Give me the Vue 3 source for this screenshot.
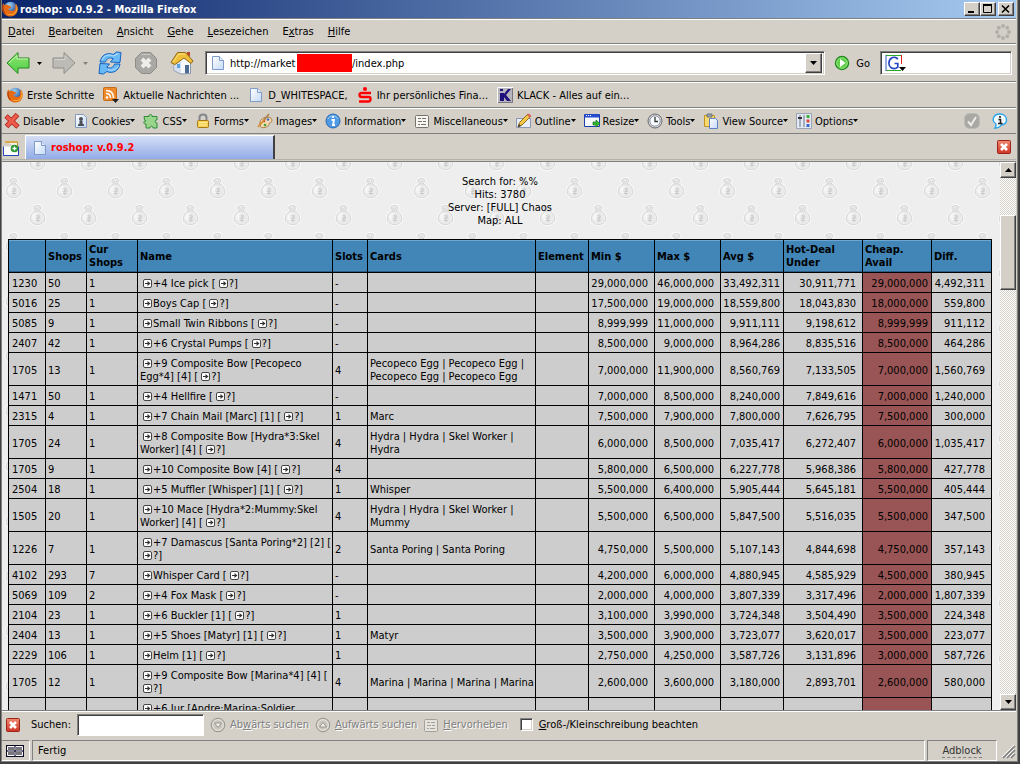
<script setup>
const menus = [['', 'D', 'atei'], ['', 'B', 'earbeiten'], ['', 'A', 'nsicht'], ['', 'G', 'ehe'], ['', 'L', 'esezeichen'], ['E', 'x', 'tras'], ['', 'H', 'ilfe']]
const tools = ['Disable', 'Cookies', 'CSS', 'Forms', 'Images', 'Information', 'Miscellaneous', 'Outline', 'Resize', 'Tools', 'View Source', 'Options']
const heads = [[''], ['Shops'], ['Cur', 'Shops'], ['Name'], ['Slots'], ['Cards'], ['Element'], ['Min $'], ['Max $'], ['Avg $'], ['Hot-Deal', 'Under'], ['Cheap.', 'Avail'], ['Diff.']]
// "@" marks the small arrow button, "/" a line break
const rows = [
  ['1230', '50', '1', '@+4 Ice pick [ @?]', '-', '', '29,000,000', '46,000,000', '33,492,311', '30,911,771', '29,000,000', '4,492,311'],
  ['5016', '25', '1', '@Boys Cap [ @?]', '-', '', '17,500,000', '19,000,000', '18,559,800', '18,043,830', '18,000,000', '559,800'],
  ['5085', '9', '1', '@Small Twin Ribbons [ @?]', '-', '', '8,999,999', '11,000,000', '9,911,111', '9,198,612', '8,999,999', '911,112'],
  ['2407', '42', '1', '@+6 Crystal Pumps [ @?]', '-', '', '8,500,000', '9,000,000', '8,964,286', '8,835,516', '8,500,000', '464,286'],
  ['1705', '13', '1', '@+9 Composite Bow [Pecopeco/Egg*4] [4] [ @?]', '4', 'Pecopeco Egg | Pecopeco Egg |/Pecopeco Egg | Pecopeco Egg', '7,000,000', '11,900,000', '8,560,769', '7,133,505', '7,000,000', '1,560,769'],
  ['1471', '50', '1', '@+4 Hellfire [ @?]', '-', '', '7,000,000', '8,500,000', '8,240,000', '7,849,616', '7,000,000', '1,240,000'],
  ['2315', '4', '1', '@+7 Chain Mail [Marc] [1] [ @?]', '1', 'Marc', '7,500,000', '7,900,000', '7,800,000', '7,626,795', '7,500,000', '300,000'],
  ['1705', '24', '1', '@+8 Composite Bow [Hydra*3:Skel/Worker] [4] [ @?]', '4', 'Hydra | Hydra | Skel Worker |/Hydra', '6,000,000', '8,500,000', '7,035,417', '6,272,407', '6,000,000', '1,035,417'],
  ['1705', '9', '1', '@+10 Composite Bow [4] [ @?]', '4', '', '5,800,000', '6,500,000', '6,227,778', '5,968,386', '5,800,000', '427,778'],
  ['2504', '18', '1', '@+5 Muffler [Whisper] [1] [ @?]', '1', 'Whisper', '5,500,000', '6,400,000', '5,905,444', '5,645,181', '5,500,000', '405,444'],
  ['1505', '20', '1', '@+10 Mace [Hydra*2:Mummy:Skel/Worker] [4] [ @?]', '4', 'Hydra | Hydra | Skel Worker |/Mummy', '5,500,000', '6,500,000', '5,847,500', '5,516,035', '5,500,000', '347,500'],
  ['1226', '7', '1', '@+7 Damascus [Santa Poring*2] [2] [/@?]', '2', 'Santa Poring | Santa Poring', '4,750,000', '5,500,000', '5,107,143', '4,844,698', '4,750,000', '357,143'],
  ['4102', '293', '7', '@Whisper Card [ @?]', '-', '', '4,200,000', '6,000,000', '4,880,945', '4,585,929', '4,500,000', '380,945'],
  ['5069', '109', '2', '@+4 Fox Mask [ @?]', '-', '', '2,000,000', '4,000,000', '3,807,339', '3,317,496', '2,000,000', '1,807,339'],
  ['2104', '23', '1', '@+6 Buckler [1] [ @?]', '1', '', '3,100,000', '3,990,000', '3,724,348', '3,504,490', '3,500,000', '224,348'],
  ['2404', '13', '1', '@+5 Shoes [Matyr] [1] [ @?]', '1', 'Matyr', '3,500,000', '3,900,000', '3,723,077', '3,620,017', '3,500,000', '223,077'],
  ['2229', '106', '1', '@Helm [1] [ @?]', '1', '', '2,750,000', '4,250,000', '3,587,726', '3,131,896', '3,000,000', '587,726'],
  ['1705', '12', '1', '@+9 Composite Bow [Marina*4] [4] [/@?]', '4', 'Marina | Marina | Marina | Marina', '2,600,000', '3,600,000', '3,180,000', '2,893,701', '2,600,000', '580,000'],
  ['', '', '', '@+6 Jur [Andre:Marina:Soldier/\u00a0/\u00a0', '', 'Andre | Marina | Soldier |/\u00a0', '', '', '', '', '', ''],
]
const lines = (text) => text.split('/').map((l) => l.split(/(@)/).filter((p) => p !== ''))
const wheel = Array.from({ length: 8 }, (_, i) => ({ x: 8 + 6 * Math.cos(i * Math.PI / 4), y: 8 + 6 * Math.sin(i * Math.PI / 4) }))
</script>

<template>
  <div class="window">
    <svg class="defs" width="0" height="0" aria-hidden="true">
      <defs>
        <linearGradient id="gGreen" x1="0" y1="0" x2="0" y2="1"><stop offset="0" stop-color="#8fe36f" /><stop offset="1" stop-color="#4fd04a" /></linearGradient>
        <linearGradient id="gRed" x1="0" y1="0" x2="0" y2="1"><stop offset="0" stop-color="#f08a70" /><stop offset="1" stop-color="#cf3424" /></linearGradient>
        <linearGradient id="gPage" x1="0" y1="0" x2="1" y2="1"><stop offset="0" stop-color="#fff" /><stop offset="1" stop-color="#c4daf8" /></linearGradient>
        <radialGradient id="gGlobe" cx=".4" cy=".25" r=".7"><stop offset="0" stop-color="#9fd8f5" /><stop offset="1" stop-color="#1a3f93" /></radialGradient>
        <symbol id="fox" viewBox="0 0 16 16">
          <circle cx="8.5" cy="7.5" r="6.8" fill="url(#gGlobe)" />
          <path d="M1.2 2.2 2.6 4.3C4 3.2 6 3.6 7.2 4.8L9.4 5.7 8.2 7.2 6.4 7.6C6.6 9.8 10 10.6 12.3 9.2 13.6 8 13.6 5.5 12.6 3.2L14 4.2 13.9 2.4C17.2 7 15.8 12.2 12.4 14.4 8.4 16.8 2.5 15.3.8 10.5-.1 7.6.2 4.6 1.2 2.2Z" fill="#e66a12" />
          <path d="M14 3.5c1.5 4 .2 8-3.2 9.4-3.4 1.1-6.6-.3-7.6-3 1.6 5.2 9.8 6.2 12-.8.6-2-.1-4-1.2-5.6Z" fill="#ffc132" />
          <path d="M1.1 4.5c-.5 3.3.2 6.4 2.3 8.3" fill="none" stroke="#a53106" />
        </symbol>
        <symbol id="page" viewBox="0 0 16 16">
          <path d="M2.500 1.500h7l4 4v9h-11Z" fill="url(#gPage)" stroke="#7d9ac8" /><path d="M9.500 1.500v4h4" fill="#e8f1ff" stroke="#7d9ac8" />
        </symbol>
        <symbol id="closeBox" viewBox="0 0 14 14">
          <rect x=".5" y=".5" width="13" height="13" rx="1" fill="url(#gRed)" stroke="#9d2418" /><path d="m4 4 6 6M10 4l-6 6" stroke="#fff" stroke-width="2.600" />
        </symbol>
        <symbol id="list" viewBox="0 0 16 16">
          <rect x="1.500" y="2.500" width="13" height="12" rx="1" fill="#f7f6f3" stroke="#77736b" /><path d="M4 5.500h3m1 0h4M4 8.500h4m1 0h3M4 11.500h2m1 0h5" stroke="#77736b" />
        </symbol>
      </defs>
    </svg>

    <header class="titlebar">
      <svg class="i16"><use href="#fox" /></svg>
      <h1>roshop: v.0.9.2 - Mozilla Firefox</h1>
      <div class="winbtns">
        <button aria-label="Minimieren"><svg viewBox="0 0 12 10"><path d="M2 8h6" stroke="#000" stroke-width="2" /></svg></button>
        <button aria-label="Maximieren"><svg viewBox="0 0 12 10"><path d="M1.500 1.500h8v7h-8Z" fill="none" stroke="#000" /><path d="M1 1h9" stroke="#000" stroke-width="2" /></svg></button>
        <button class="x" aria-label="Schließen"><svg viewBox="0 0 12 10"><path d="m2 1.500 7 7M9 1.500l-7 7" stroke="#000" stroke-width="1.600" /></svg></button>
      </div>
    </header>

    <nav class="bar menu">
      <button v-for="m in menus" :key="m[1]">{{ m[0] }}<u>{{ m[1] }}</u>{{ m[2] }}</button>
      <svg class="i16 end" viewBox="0 0 16 16"><circle v-for="(d, i) in wheel" :key="i" :cx="d.x" :cy="d.y" r="1.900" fill="#b1afaa" /></svg>
    </nav>

    <div class="bar navbar">
      <button class="arrowbtn" aria-label="Zurück">
        <svg class="i24" viewBox="0 0 24 24"><path d="M1 12 12 1.500v5.500h11v10H12v5.500Z" fill="url(#gGreen)" stroke="#238a1d" /><path d="M3 12l8-7.500v3.500h11" fill="none" stroke="#c9f5b5" /></svg>
        <svg class="drop" viewBox="0 0 5 3"><path d="M0 0h5L2.500 3Z" /></svg>
      </button>
      <button class="arrowbtn" aria-label="Vor" disabled>
        <svg class="i24" viewBox="0 0 24 24"><path d="M23 12 12 1.500v5.500H1v10h11v5.500Z" fill="#bdbbb6" stroke="#8f8d89" /><path d="M2 8.500h11v-4" fill="none" stroke="#d5d3ce" /></svg>
        <svg class="drop" viewBox="0 0 5 3"><path d="M0 0h5L2.500 3Z" fill="#85837f" /></svg>
      </button>
      <button class="big" aria-label="Neu laden">
        <svg class="i24" viewBox="0 0 24 24">
          <path d="M2 11C3 4.500 9 .8 15.200 3.500L18.500 1l4.500.500-1 10-9.500-.500 2.700-3.200C11.500 6 8.500 7.500 7.500 11Z" fill="#69b9f5" stroke="#1763c0" />
          <path d="M22 13c-1 6.500-7 10.200-13.200 7.500L5.500 23 1 22.500l1-10 9.500.5-2.700 3.200c3.700 1.800 6.700.3 7.700-3.200Z" fill="#69b9f5" stroke="#1763c0" />
          <path d="M4 9C6 4 11 3 15.500 5L20.500 2.500M10 18.500c4.500 2 9-.5 10.500-4" fill="none" stroke="#bde3ff" />
        </svg>
      </button>
      <button class="big" aria-label="Stopp" disabled>
        <svg class="i24" viewBox="0 0 24 24"><path d="M7.500 1.500h9l6 6v9l-6 6h-9l-6-6v-9Z" fill="#a9a8a5" stroke="#8d8b88" /><path d="M7.500 3.500h9" stroke="#c9c7c3" /><path d="m8 8 8 8M16 8l-8 8" stroke="#efede9" stroke-width="4" /></svg>
      </button>
      <button class="big" aria-label="Startseite">
        <svg class="i24" viewBox="0 0 24 24"><path d="m4 11 7-7 9.500 7v11.500l-9.500.5-7-3.500Z" fill="#f7f9fd" stroke="#8b98ad" /><path d="M4.500 12l6.500-6v16l-6.500-3Z" fill="#d4dfef" /><path d="M1 11.500 7.500 1.500h8l7.500 8.500-2 2.500-7-5.500-9 6.500Z" fill="#efbf38" stroke="#8c6715" /><path d="m3 11 6-8h6" fill="none" stroke="#fbe487" /><path d="M17 1h3v5l-3-3Z" fill="#b4482c" /><path d="M15 14h4v8l-4 .5Z" fill="#4d6a91" /><rect x="7" y="13" width="3" height="4" fill="#5aa2e0" /></svg>
      </button>
      <div class="field url">
        <svg class="i16"><use href="#page" /></svg>
        <input class="host" aria-label="Adresse" value="http://market"><span class="mask"></span><input class="path" aria-label="Pfad" value="/index.php">
        <button class="classic combo" aria-label="Adressliste"><svg viewBox="0 0 7 4"><path d="M0 0h7L3.500 4Z" /></svg></button>
      </div>
      <button class="go"><svg class="i16" viewBox="0 0 16 16"><circle cx="8" cy="8" r="6.500" fill="#62cf4c" stroke="#1f8a1c" stroke-width="1.400" /><circle cx="8" cy="8" r="5.300" fill="none" stroke="#a8ec90" stroke-width=".8" /><path d="m6 4 5.500 4L6 12Z" fill="#fff" /></svg>Go</button>
      <div class="field search">
        <svg class="google" viewBox="0 0 22 18"><path d="M1 17V1" stroke="#3557c8" /><path d="M1 1.500h15M1 16.500h15" stroke="#2da72d" /><path d="M16.500 1v9" stroke="#e32222" /><path d="M12.800 5.200C11.500 3 8.500 2.700 6.300 4.200 3 6.500 3.300 12 6.200 13.700c2.200 1.300 5 .8 6.600-.5V9.500H9.500" fill="none" stroke="#2547c5" stroke-width="1.700" /><path d="M14 13h7l-3.500 4Z" /></svg>
        <input aria-label="Google-Suche">
      </div>
    </div>

    <div class="bar bookmarks">
      <a href="#"><svg class="i16"><use href="#fox" /></svg>Erste Schritte</a>
      <a href="#"><svg class="i16" viewBox="0 0 16 16"><rect x=".5" y=".5" width="13" height="13" rx="1" fill="#ef8a2c" stroke="#c96a14" /><circle cx="4" cy="10.500" r="1.300" fill="#fff" /><path d="M3 6.500c3 0 4.500 1.500 4.500 4.500M3 3.500c5 0 7.500 2.500 7.500 7.500" fill="none" stroke="#fff" stroke-width="1.500" /><path d="M9 12h7l-3.500 4Z" fill="#222" /></svg>Aktuelle Nachrichten ...</a>
      <a href="#"><svg class="i16"><use href="#page" /></svg>D_WHITESPACE,</a>
      <a href="#"><svg class="i16" viewBox="0 0 16 16"><circle cx="8" cy="2" r="2" fill="#f00" /><path d="M14 6H5c-2 0-2.500.5-2.500 2s.5 2 2.500 2h7c1.200 0 1.500.3 1.500 2s-.5 2.500-2 2.500H2" fill="none" stroke="#f00" stroke-width="2.400" /></svg>Ihr persönliches Fina...</a>
      <a href="#"><svg class="i16" viewBox="0 0 16 16"><path d="M0 0h16v16H0Z" fill="#b5b5bb" /><path d="M.5 16V.5H16" fill="none" stroke="#fff" /><path d="M15.500 1v14.500H1" fill="none" stroke="#77777d" /><path d="M3 2h3v2H3ZM3 6h4v1l4-5h3L9 8l5 6h-4L7 10v4H3Z" fill="#20107e" /></svg>KLACK - Alles auf ein...</a>
    </div>

    <div class="bar devbar">
      <button v-for="(t, i) in tools" :key="t">
        <svg class="i16" viewBox="0 0 16 16">
          <g v-if="i === 0"><path d="m2 3 12 11M13.500 1.500l-11 12" stroke="#a92217" stroke-width="5" /><path d="m2.500 3.500 11 10M13 2l-10 11" stroke="#ee5b4c" stroke-width="3.400" /></g>
          <g v-else-if="i === 1"><path d="M2.500 1.500h8l3 3v10h-11Z" fill="url(#gPage)" stroke="#8298bd" /><circle cx="8" cy="6" r="2" fill="#4b5157" /><path d="M6.500 8h3v2.500l1.500 1V13H5v-1.500l1.500-1Z" fill="#4b5157" /></g>
          <path v-else-if="i === 2" d="M1 3.500h5c-1-2.500 4-2.500 3 0h5v3.500c-2.500-.5-2.500 3.500 0 3v5h-4c.5-2.500-3.500-2.500-3 0H3v-4c-3 .5-3-3.500 0-3L1.500 7Z" fill="#9ad58e" stroke="#2f8b35" />
          <g v-else-if="i === 3"><path d="M4.500 8V4.500c0-4 7-4 7 0V8" fill="none" stroke="#85868b" stroke-width="2" /><rect x="2.500" y="7.500" width="11" height="7" rx="1" fill="#f6d04f" stroke="#a47b18" /><path d="M4 9.500h8M4 12h8" stroke="#fff0a5" /></g>
          <g v-else-if="i === 4"><path d="M3 9c1-5 11-7 12-2 .5 3-3 2-3 4 .5 3-9 6-9 1Z" fill="#f3dab1" stroke="#a97d46" /><circle cx="11" cy="6.500" r="1.300" fill="#3a6fd0" /><circle cx="7" cy="8" r="1.300" fill="#d23a2f" /><circle cx="8" cy="12" r="1.300" fill="#3ba43b" /><path d="m1 14 7-8" stroke="#d28a2f" stroke-width="1.600" /><path d="m7 7 5-6" stroke="#b0804a" stroke-width="1.600" /></g>
          <g v-else-if="i === 5"><circle cx="8" cy="8" r="7" fill="#4f9ae6" stroke="#2e69ae" /><path d="M3 6c2-4 8-4 10 0" fill="none" stroke="#a7d0f9" /><path d="M8 3v2M6.500 7H9l-1 5h2" fill="none" stroke="#fff" stroke-width="1.800" /></g>
          <use v-else-if="i === 6" href="#list" />
          <g v-else-if="i === 7"><path d="M.5 5.500h14v9H.5Z" fill="#e8eef9" stroke="#8b97b5" /><path d="m2 14 1.500-4.500L12 1l2.500 2.500L6 12Z" fill="#f5c945" stroke="#8f6d1b" /><path d="M11 2l2.500 2.500L15.500 3 13 .5Z" fill="#dd6558" /><path d="m2 14 1-3 2 2Z" fill="#333" /></g>
          <g v-else-if="i === 8"><path d="M.5 1.500h15v12H.5Z" fill="#f7f9fd" stroke="#1b3db0" /><path d="M1 3h14" stroke="#274fd0" stroke-width="3" /><path d="M2 2.500h1m1 0h1m1 0h1" stroke="#fff" /><path d="M9 9h3V7l4 3.500L12 14v-2H9Z" fill="#35b42f" stroke="#16761a" stroke-width=".7" /></g>
          <g v-else-if="i === 9"><circle cx="8" cy="8" r="7" fill="#dcdde2" stroke="#66676d" /><circle cx="8" cy="8" r="5.200" fill="#f8fbff" stroke="#8c919d" /><path d="M8 4v4.500h3" fill="none" stroke="#333" stroke-width="1.300" /></g>
          <g v-else-if="i === 10"><path d="M1.500 2.500h10v11h-10Z" fill="#f7d96c" stroke="#c49524" /><path d="M4 1h5v3H4Z" fill="#98a3ae" stroke="#606b75" stroke-width=".8" /><path d="M6.500 5.500h6l2 2v8h-8Z" fill="url(#gPage)" stroke="#5c82c2" /></g>
          <g v-else><path d="M.5.5h15v15H.5Z" fill="#e2e9f4" stroke="#9aa4b5" /><path d="M4 2v12M8 2v12" stroke="#6d7785" /><path d="M2 5h4" stroke="#333" stroke-width="2" /><path d="M10.500 2h3v3h-3Z" fill="#3cae3c" /><path d="M10.500 6.500h3v3h-3Z" fill="#e04a3c" /><path d="M10.500 11h3v3h-3Z" fill="#3b6bd0" /></g>
        </svg><span>{{ t }}<svg class="drop" viewBox="0 0 5 3"><path d="M0 0h5L2.500 3Z" /></svg></span>
      </button>
      <svg class="i16 end" viewBox="0 0 16 16"><rect x=".5" y=".5" width="15" height="15" rx="5" fill="#a9a8a4" stroke="#bdbbb6" /><path d="m4 8.500 3 3.500 5-8" fill="none" stroke="#eeece8" stroke-width="2" /></svg>
      <svg class="i16 tip" viewBox="0 0 16 16"><path d="M8 1c8 0 9 11 1 11-1 2-4 3-6 3 1-1 1-2 1-4C-1 8 1 1 8 1Z" fill="#f3faff" stroke="#27a4ea" stroke-width="1.400" /><path d="M8 3v2M6.500 6.500h2V10M6 10.500h4.500" fill="none" stroke="#222" stroke-width="1.600" /></svg>
    </div>

    <div class="tabs">
      <button class="newtab" aria-label="Neuer Tab"><svg class="i16" viewBox="0 0 16 16"><path d="M2.500 1.500h12v6" fill="#f5f2e8" stroke="#b98a2b" /><path d="M2 2h13" stroke="#dba94a" stroke-width="2" /><path d="M.5 6.500v9h15v-9" fill="#fff" stroke="#2445b5" /><circle cx="11.500" cy="8.500" r="3.800" fill="#2d9631" /><path d="M9.500 8.500h4M11.500 6.500v4" stroke="#fff" stroke-width="1.300" /></svg></button>
      <button class="tab"><svg class="i16"><use href="#page" /></svg>roshop: v.0.9.2</button>
      <button class="closetab" aria-label="Tab schließen"><svg class="i14"><use href="#closeBox" /></svg></button>
    </div>

    <div class="view">
      <main class="page">
        <svg class="wallpaper" aria-hidden="true">
          <defs>
            <symbol id="bag" viewBox="0 0 18 22" overflow="visible">
              <path d="M7 6.500 5 4V2l3-1.500h3L13 2.500 11 6.500c4 1.500 6 5 6 8.500 0 4-3.500 6.500-8 6.500S1 19 1 15C1 11.500 3 8 7 6.500Z" fill="#ededed" stroke="#fafafa" stroke-width="3" />
              <path d="M7 6.500 5 4V2l3-1.500h3L13 2.500 11 6.500c4 1.500 6 5 6 8.500 0 4-3.500 6.500-8 6.500S1 19 1 15C1 11.500 3 8 7 6.500Z" fill="#ebebeb" stroke="#d2d2d2" />
              <path d="M6 3l3 2 2-3M6.500 6.500h5" fill="none" stroke="#cfcfcf" stroke-width=".8" /><circle cx="7" cy="13" r="4" fill="#f6f6f6" />
              <path d="M7 12h4.500l-4 5H12M6.500 14.500h5.500M9.500 10v9" fill="none" stroke="#c2c2c2" stroke-width=".8" />
            </symbol>
            <pattern id="bags" width="51" height="55" patternUnits="userSpaceOnUse">
              <rect width="51" height="55" fill="#eee" />
              <use href="#bag" x="3" y="16" width="17" height="20" /><use href="#bag" x="27" y="43" width="17" height="20" /><use href="#bag" x="27" y="-12" width="17" height="20" />
            </pattern>
          </defs>
          <rect width="100%" height="100%" fill="url(#bags)" />
        </svg>
        <p class="info">Search for: %%<br>Hits: 3780<br>Server: [FULL] Chaos<br>Map: ALL</p>
        <table>
          <colgroup><col v-for="(h, i) in heads" :key="i" :class="'c' + i"></colgroup>
          <thead>
            <tr><th v-for="(h, i) in heads" :key="i" scope="col"><template v-for="(l, k) in h" :key="k"><br v-if="k">{{ l }}</template></th></tr>
          </thead>
          <tbody>
            <tr v-for="(r, ri) in rows" :key="ri">
              <td>{{ r[0] }}</td><td>{{ r[1] }}</td><td>{{ r[2] }}</td>
              <td><template v-for="(l, k) in lines(r[3])" :key="k"><br v-if="k"><template v-for="(p, j) in l" :key="j"><svg v-if="p === '@'" class="mark" :class="{ lead: j === 0 }" viewBox="0 0 9 9"><rect x=".5" y=".5" width="8" height="8" rx="1.500" fill="#fff" stroke="#444" /><path d="M2 4.500h3" stroke="#333" /><path d="M4.500 2v5L7.500 4.500Z" fill="#333" /></svg><template v-else>{{ p }}</template></template></template></td>
              <td>{{ r[4] }}</td>
              <td><template v-for="(l, k) in r[5].split('/')" :key="k"><br v-if="k">{{ l }}</template></td>
              <td></td>
              <td v-for="n in 6" :key="n" class="num" :class="{ tight: n === 3, cheap: n === 5 }">{{ r[5 + n] }}</td>
            </tr>
          </tbody>
        </table>
      </main>
      <div class="scroll">
        <button class="classic" aria-label="Nach oben"><svg viewBox="0 0 7 4"><path d="M0 4h7L3.500 0Z" /></svg></button>
        <div class="above"></div><div class="classic thumb"></div><div class="below"></div>
        <button class="classic" aria-label="Nach unten"><svg viewBox="0 0 7 4"><path d="M0 0h7L3.500 4Z" /></svg></button>
      </div>
    </div>

    <div class="find">
      <button aria-label="Suchleiste schließen"><svg class="i14"><use href="#closeBox" /></svg></button>
      <label for="q">Suchen:</label><input id="q" class="q">
      <button disabled><svg class="i16" viewBox="0 0 16 16"><circle cx="8" cy="8" r="6.800" fill="#c9c6c0" stroke="#98958f" /><circle cx="8" cy="8" r="5.300" fill="none" stroke="#e9e6e0" /><path d="M4.500 6h7L8 10.500Z" fill="#f3f1ed" stroke="#98958f" /></svg><span>Ab<u>w</u>ärts suchen</span></button>
      <button disabled><svg class="i16" viewBox="0 0 16 16"><circle cx="8" cy="8" r="6.800" fill="#c9c6c0" stroke="#98958f" /><circle cx="8" cy="8" r="5.300" fill="none" stroke="#e9e6e0" /><path d="M4.500 10h7L8 5.500Z" fill="#f3f1ed" stroke="#98958f" /></svg><span><u>A</u>ufwärts suchen</span></button>
      <button disabled><svg class="i16 faded"><use href="#list" /></svg><span><u>H</u>ervorheben</span></button>
      <label class="case"><input type="checkbox"><span><u>G</u>roß-/Kleinschreibung beachten</span></label>
    </div>

    <footer class="status">
      <div class="cell grid"><svg viewBox="0 0 18 12"><path d="M0 0h18v12H0Z" fill="#0c0c28" /><path d="M1.500 1.500h7v4h-7ZM9.500 1.500h7v4h-7ZM1.500 6.500h7v4h-7ZM9.500 6.500h7v4h-7Z" fill="#77777d" stroke="#fff" /><path d="M9 0v12M0 6h18" stroke="#0c0c28" /></svg></div>
      <div class="cell msg">Fertig</div>
      <div class="cell ad"><button>Adblock</button></div>
      <svg class="grip" viewBox="0 0 14 14"><path d="M1 13 13 1M5 13l8-8M9 13l4-4" stroke="#808080" stroke-width="1.600" /><path d="M0 12 12 0M4 12l8-8M8 12l4-4" stroke="#fff" /></svg>
    </footer>
  </div>
</template>

<style>
body { margin: 0; background: #d4d0c8; }
</style>

<style scoped>
* { box-sizing: border-box; }
.window { display: flex; flex-direction: column; height: 100vh; overflow: hidden; background: #d4d0c8; border: solid #404040; border-width: 0 2px 2px 1px; box-shadow: inset 1px 0 #808080, inset -1px -1px #808080; padding: 0 2px 1px 1px; font: 11px/13px "DejaVu Sans Condensed", "Liberation Sans", sans-serif; color: #000; white-space: nowrap; }
.defs { position: absolute; }
button, input { font: inherit; color: inherit; background: none; border: 0; padding: 0; margin: 0; outline: 0; min-width: 0; }
button { display: flex; align-items: center; }
a { color: inherit; text-decoration: none; display: flex; align-items: center; gap: 4px; }
svg { flex: none; }
.i16 { width: 16px; height: 16px; }
.i14 { width: 14px; height: 14px; }
.i24 { width: 24px; height: 24px; }
.drop { width: 5px; height: 3px; }
.end { margin-left: auto; }
.titlebar { flex: none; display: flex; align-items: center; height: 18px; gap: 2px; padding: 0 2px 0 0; color: #fff; background: linear-gradient(90deg, #0a246a, #a6caf0); }
h1 { margin: 0; font-size: 11px; line-height: 13px; font-weight: bold; }
.winbtns { display: flex; margin-left: auto; }
.winbtns button, .classic { background: #d4d0c8; border: 1px solid; border-color: #fff #404040 #404040 #fff; box-shadow: inset -1px -1px #808080; justify-content: center; }
.winbtns button { width: 16px; height: 14px; }
.winbtns .x { margin-left: 2px; }
.winbtns svg { width: 12px; height: 10px; }
.bar { flex: none; display: flex; align-items: center; border-bottom: 1px solid #808080; border-top: 1px solid #fff; height: 26px; }
.menu { height: 25px; margin-top: 1px; box-shadow: 0 -1px #808080; gap: 14px; padding: 0 5px 0 6px; }
.navbar { height: 38px; padding: 0 4px; gap: 10px; }
.arrowbtn { gap: 7px; }
.big { margin-right: 2px; }
.field { display: flex; align-items: center; height: 24px; background: #fff; border: 1px solid; border-color: #808080 #fff #fff #808080; box-shadow: inset 1px 1px #404040, inset -1px -1px #d4d0c8; padding: 2px; }
.url { flex: 1; padding-left: 4px; margin: 0 -1px; }
.host { width: 67px; margin-left: 4px; }
.mask { width: 55px; height: 18px; background: #f00; }
.path { flex: 1; }
.combo { width: 17px; height: 20px; }
.combo svg, .scroll svg { width: 7px; height: 4px; }
.go { gap: 6px; }
.search { width: 132px; }
.google { width: 22px; height: 18px; margin-left: 2px; }
.search input { flex: 1; }
.bookmarks { padding: 0 5px; gap: 9px; }
.devbar { padding: 0 8px 0 2px; gap: 8px; }
.devbar button { gap: 3px; }
.devbar button .drop { vertical-align: 3px; }
.tip { margin: 0 0 0 4px; }
.tabs { flex: none; display: flex; height: 28px; padding: 1px 5px 0 0; border-bottom: 1px solid #808080; background: linear-gradient(#b4b2ac, #b4b2ac) 0 25px / 100% 1px no-repeat #d4d0c8; }
.newtab { width: 23px; padding-left: 1px; }
.tab { width: 250px; height: 24px; gap: 3px; padding-left: 6px; border: 1px solid; border-width: 1px 2px 0 1px; border-color: #fff #404040 #fff #fff; background: linear-gradient(#d5dff5, #93ace8); color: #f00; font-weight: bold; }
.closetab { margin-left: auto; height: 24px; }
.view { flex: 1; min-height: 0; display: flex; }
.page { flex: 1; position: relative; overflow: hidden; padding: 13px 8px 0 6px; }
.wallpaper { position: absolute; inset: 0; width: 100%; height: 100%; }
.info { position: relative; margin: 0 0 12px; text-align: center; }
table { position: relative; width: 100%; table-layout: fixed; border-collapse: collapse; background: #cdcdcd; }
th, td { border: 1px solid #000; padding: 3px 0 3px 2px; text-align: left; vertical-align: middle; }
td { height: 20px; padding: 4px 0 2px 2px; }
td:first-child { padding-left: 3px; }
th { height: 33px; background: #4186b6; box-shadow: inset 0 1px #6ea8d2, inset 0 -1px #2b5d85; }
.c0 { width: 37px; }
.c1 { width: 41px; }
.c2 { width: 51px; }
.c3 { width: 195px; }
.c4 { width: 35px; }
.c6 { width: 53px; }
.c7, .c8 { width: 66px; }
.c9 { width: 63px; }
.c10 { width: 79px; }
.c11 { width: 69px; }
.c12 { width: 60px; }
.num { text-align: right; padding: 4px 6px 2px 0; }
.tight, .cheap { padding-right: 3px; }
.cheap { background: #995555; }
.mark { width: 9px; height: 9px; margin: 0 1px 0 0; vertical-align: -1px; }
.lead { margin-left: 3px; }
.scroll { flex: none; display: flex; flex-direction: column; width: 16px; background: repeating-conic-gradient(#fff 0 25%, #d4d0c8 0 50%) 0 0 / 2px 2px; }
.scroll button { height: 16px; flex: none; }
.above { flex: 37; }
.thumb { flex: 73; }
.below { flex: 406; }
.find { flex: none; display: flex; align-items: center; height: 30px; padding: 0 4px 2px; border-top: 1px solid #808080; box-shadow: inset 0 1px #fff; gap: 6px; }
.find button { gap: 4px; }
.find label[for] { margin-left: 5px; }
.q { width: 127px; height: 22px; padding: 0 4px; background: #fff; border: 1px solid; border-color: #808080 #fff #fff #808080; box-shadow: inset 1px 1px #404040; }
.find button:disabled { color: #808080; text-shadow: 1px 1px #fff; }
.faded { opacity: .5; }
.case { display: flex; align-items: center; gap: 6px; margin-left: 6px; }
.case input { appearance: none; width: 13px; height: 13px; background: #fff; border: 1px solid; border-color: #808080 #fff #fff #808080; box-shadow: inset 1px 1px #404040, inset -1px -1px #d4d0c8; }
.status { flex: none; display: flex; height: 21px; gap: 2px; }
.cell { display: flex; align-items: center; border: 1px solid; border-color: #808080 #fff #fff #808080; }
.grid { width: 28px; padding-left: 4px; border-left: 0; }
.grid svg { width: 18px; height: 12px; }
.msg { flex: 1; padding-left: 5px; }
.ad { width: 70px; justify-content: center; }
.ad button { border-bottom: 1px dashed #808080; color: #333; }
.grip { width: 14px; height: 14px; margin: 5px 0 0 3px; }
</style>
